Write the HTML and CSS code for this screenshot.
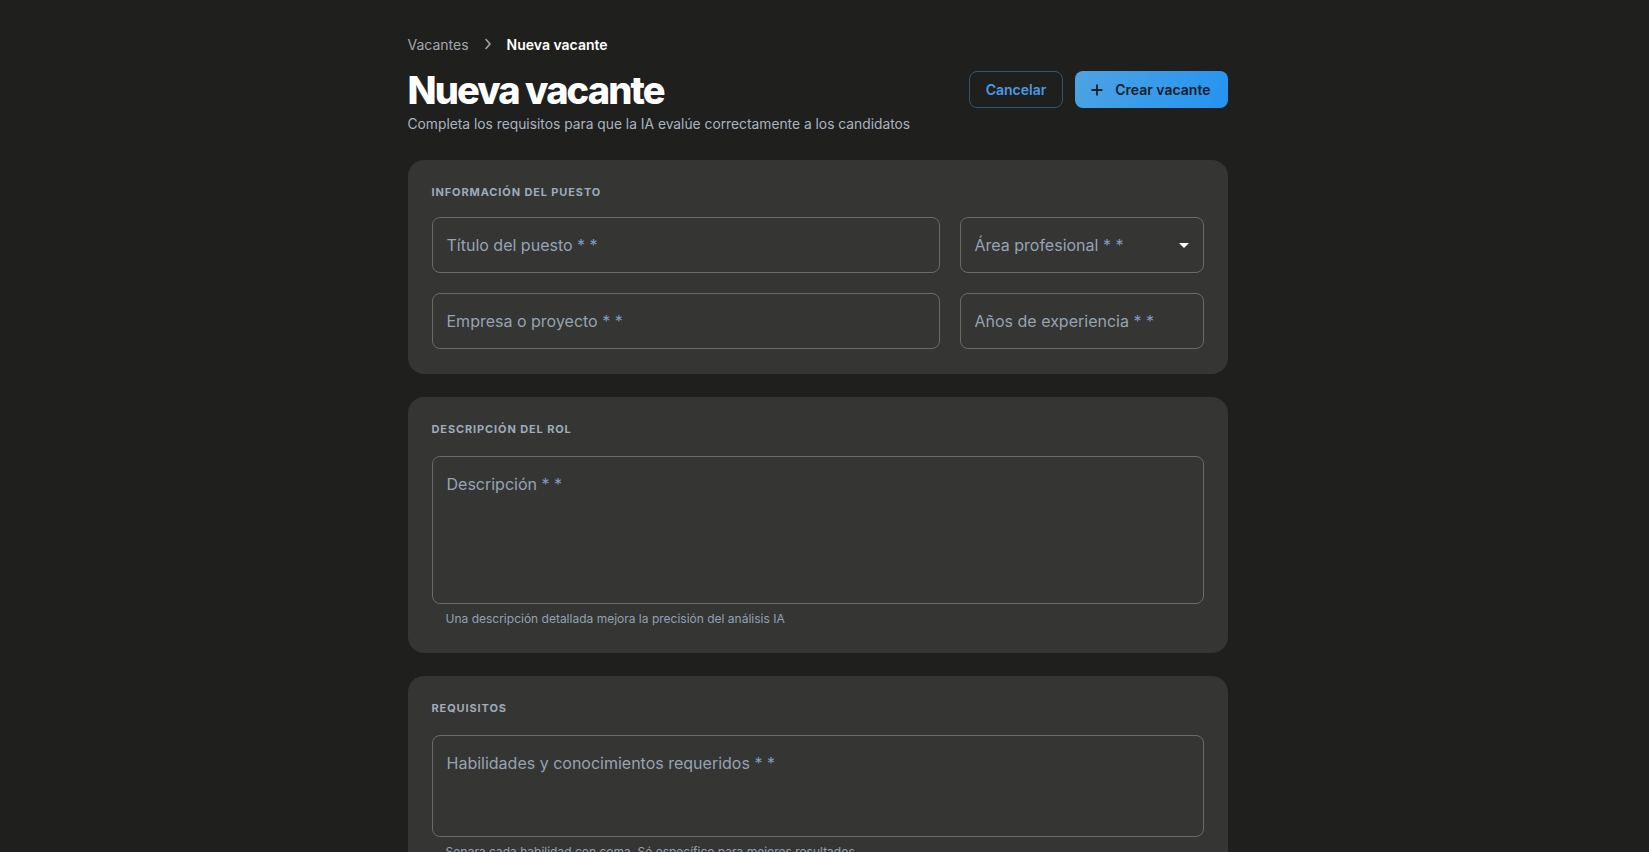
FILE: index.html
```html
<!DOCTYPE html>
<html lang="es">
  <head>
    <meta charset="UTF-8">
    <meta name="viewport" content="width=device-width, initial-scale=1.0">
    <title>Nueva vacante</title>
    <link rel="stylesheet" href="styles.css">
  </head>
  <body>
    <div class="page">
      <nav class="breadcrumb">
        <span class="crumb">Vacantes</span>
        <svg class="crumb-sep" width="16" height="16" viewBox="0 0 16 16" fill="none">
          <path d="M6 3.5 L10 8 L6 12.5" stroke="#a3a7ad" stroke-width="1.6" stroke-linecap="round" stroke-linejoin="round"/>
        </svg>
        <span class="crumb current">Nueva vacante</span>
      </nav>

      <header class="page-header">
        <div>
          <h1>Nueva vacante</h1>
          <p class="subtitle">Completa los requisitos para que la IA evalúe correctamente a los candidatos</p>
        </div>
        <div class="actions">
          <button class="btn btn-outline">Cancelar</button>
          <button class="btn btn-primary">
            <svg width="12" height="12" viewBox="0 0 12 12" fill="none">
              <path d="M6 0.5 V11.5 M0.5 6 H11.5" stroke="#16202b" stroke-width="1.8"/>
            </svg>
            Crear vacante
          </button>
        </div>
      </header>

      <section class="card">
        <h2 class="card-title">Información del puesto</h2>
        <div class="grid">
          <div class="field"><span class="field-label">Título del puesto <span class="req">* *</span></span></div>
          <div class="field select"><span class="field-label">Área profesional <span class="req">* *</span></span><span class="arrow"></span></div>
          <div class="field"><span class="field-label">Empresa o proyecto <span class="req">* *</span></span></div>
          <div class="field"><span class="field-label">Años de experiencia <span class="req">* *</span></span></div>
        </div>
      </section>

      <section class="card">
        <h2 class="card-title">Descripción del rol</h2>
        <div class="field area area-lg"><span class="field-label">Descripción <span class="req">* *</span></span></div>
        <p class="helper">Una descripción detallada mejora la precisión del análisis IA</p>
      </section>

      <section class="card">
        <h2 class="card-title">Requisitos</h2>
        <div class="field area area-sm"><span class="field-label">Habilidades y conocimientos requeridos <span class="req">* *</span></span></div>
        <p class="helper">Separa cada habilidad con coma. Sé específico para mejores resultados</p>
      </section>
    </div>
  </body>
</html>
```

FILE: styles.css
```css
html,
body {
  margin: 0;
  background: #1f1f1e;
  font-family: 'Inter', 'Roboto', sans-serif;
  color: #f4f5f7;
}

/* leave room as if a scrollbar were there */
body {
  padding-right: 14px;
}

.page {
  width: 820px;
  margin: 0 auto;
  padding: 34px 0 40px;
}

.breadcrumb {
  display: flex;
  align-items: center;
  gap: 11px;
  height: 20px;
  font-size: 14px;
  margin-bottom: 13px;
}

.crumb {
  color: #a3a7ad;
}

.crumb.current {
  color: #ffffff;
  font-weight: 600;
}

.page-header {
  display: flex;
  justify-content: space-between;
  align-items: flex-start;
  margin-bottom: 26px;
}

h1 {
  margin: 0;
  font-size: 38px;
  line-height: 46px;
  font-weight: 800;
  letter-spacing: -0.05em;
  color: #ffffff;
}

.subtitle {
  margin: 1px 0 0;
  font-size: 13.8px;
  line-height: 20px;
  color: #aab4c1;
}

.actions {
  display: flex;
  gap: 12px;
  margin-top: 4px;
}

.btn {
  height: 37px;
  border-radius: 8px;
  font-family: 'Inter', sans-serif;
  font-size: 14px;
  font-weight: 600;
  display: flex;
  align-items: center;
  cursor: pointer;
}

.btn-outline {
  background: transparent;
  border: 1px solid #2c5577;
  color: #4a9be0;
  padding: 0 16px;
}

.btn-primary {
  border: none;
  background: linear-gradient(120deg, #4ea3e2, #2394f2);
  color: #16202b;
  padding: 0 17px 0 16px;
  gap: 12px;
}

.card {
  background: #353533;
  border-radius: 16px;
  padding: 24px 24px 25px;
  margin-bottom: 23px;
}

.card-title {
  margin: 0 0 17px;
  font-size: 11px;
  line-height: 16px;
  font-weight: 700;
  letter-spacing: 0.08em;
  text-transform: uppercase;
  color: #9eabbb;
}

.grid {
  display: grid;
  grid-template-columns: 508px 244px;
  gap: 20px;
}

.field {
  box-sizing: border-box;
  height: 56px;
  border: 1px solid #6a6a69;
  border-radius: 8px;
  padding: 0 14px;
  display: flex;
  align-items: center;
  justify-content: space-between;
}

.field-label {
  font-size: 16px;
  color: #97a3b3;
}

.req {
  color: #7e9cc2;
}

.arrow {
  width: 0;
  height: 0;
  border-left: 5px solid transparent;
  border-right: 5px solid transparent;
  border-top: 5px solid #ffffff;
}

.area {
  align-items: flex-start;
  margin-top: 19px;
  padding-top: 16px;
  line-height: 23px;
}

.card .card-title:has(+ .area) {
  margin-bottom: 0;
}

.area-lg {
  height: 148px;
}

.area-sm {
  height: 102px;
}

.helper {
  margin: 6px 14px 0;
  font-size: 12px;
  line-height: 18px;
  color: #93a1b3;
}
```
